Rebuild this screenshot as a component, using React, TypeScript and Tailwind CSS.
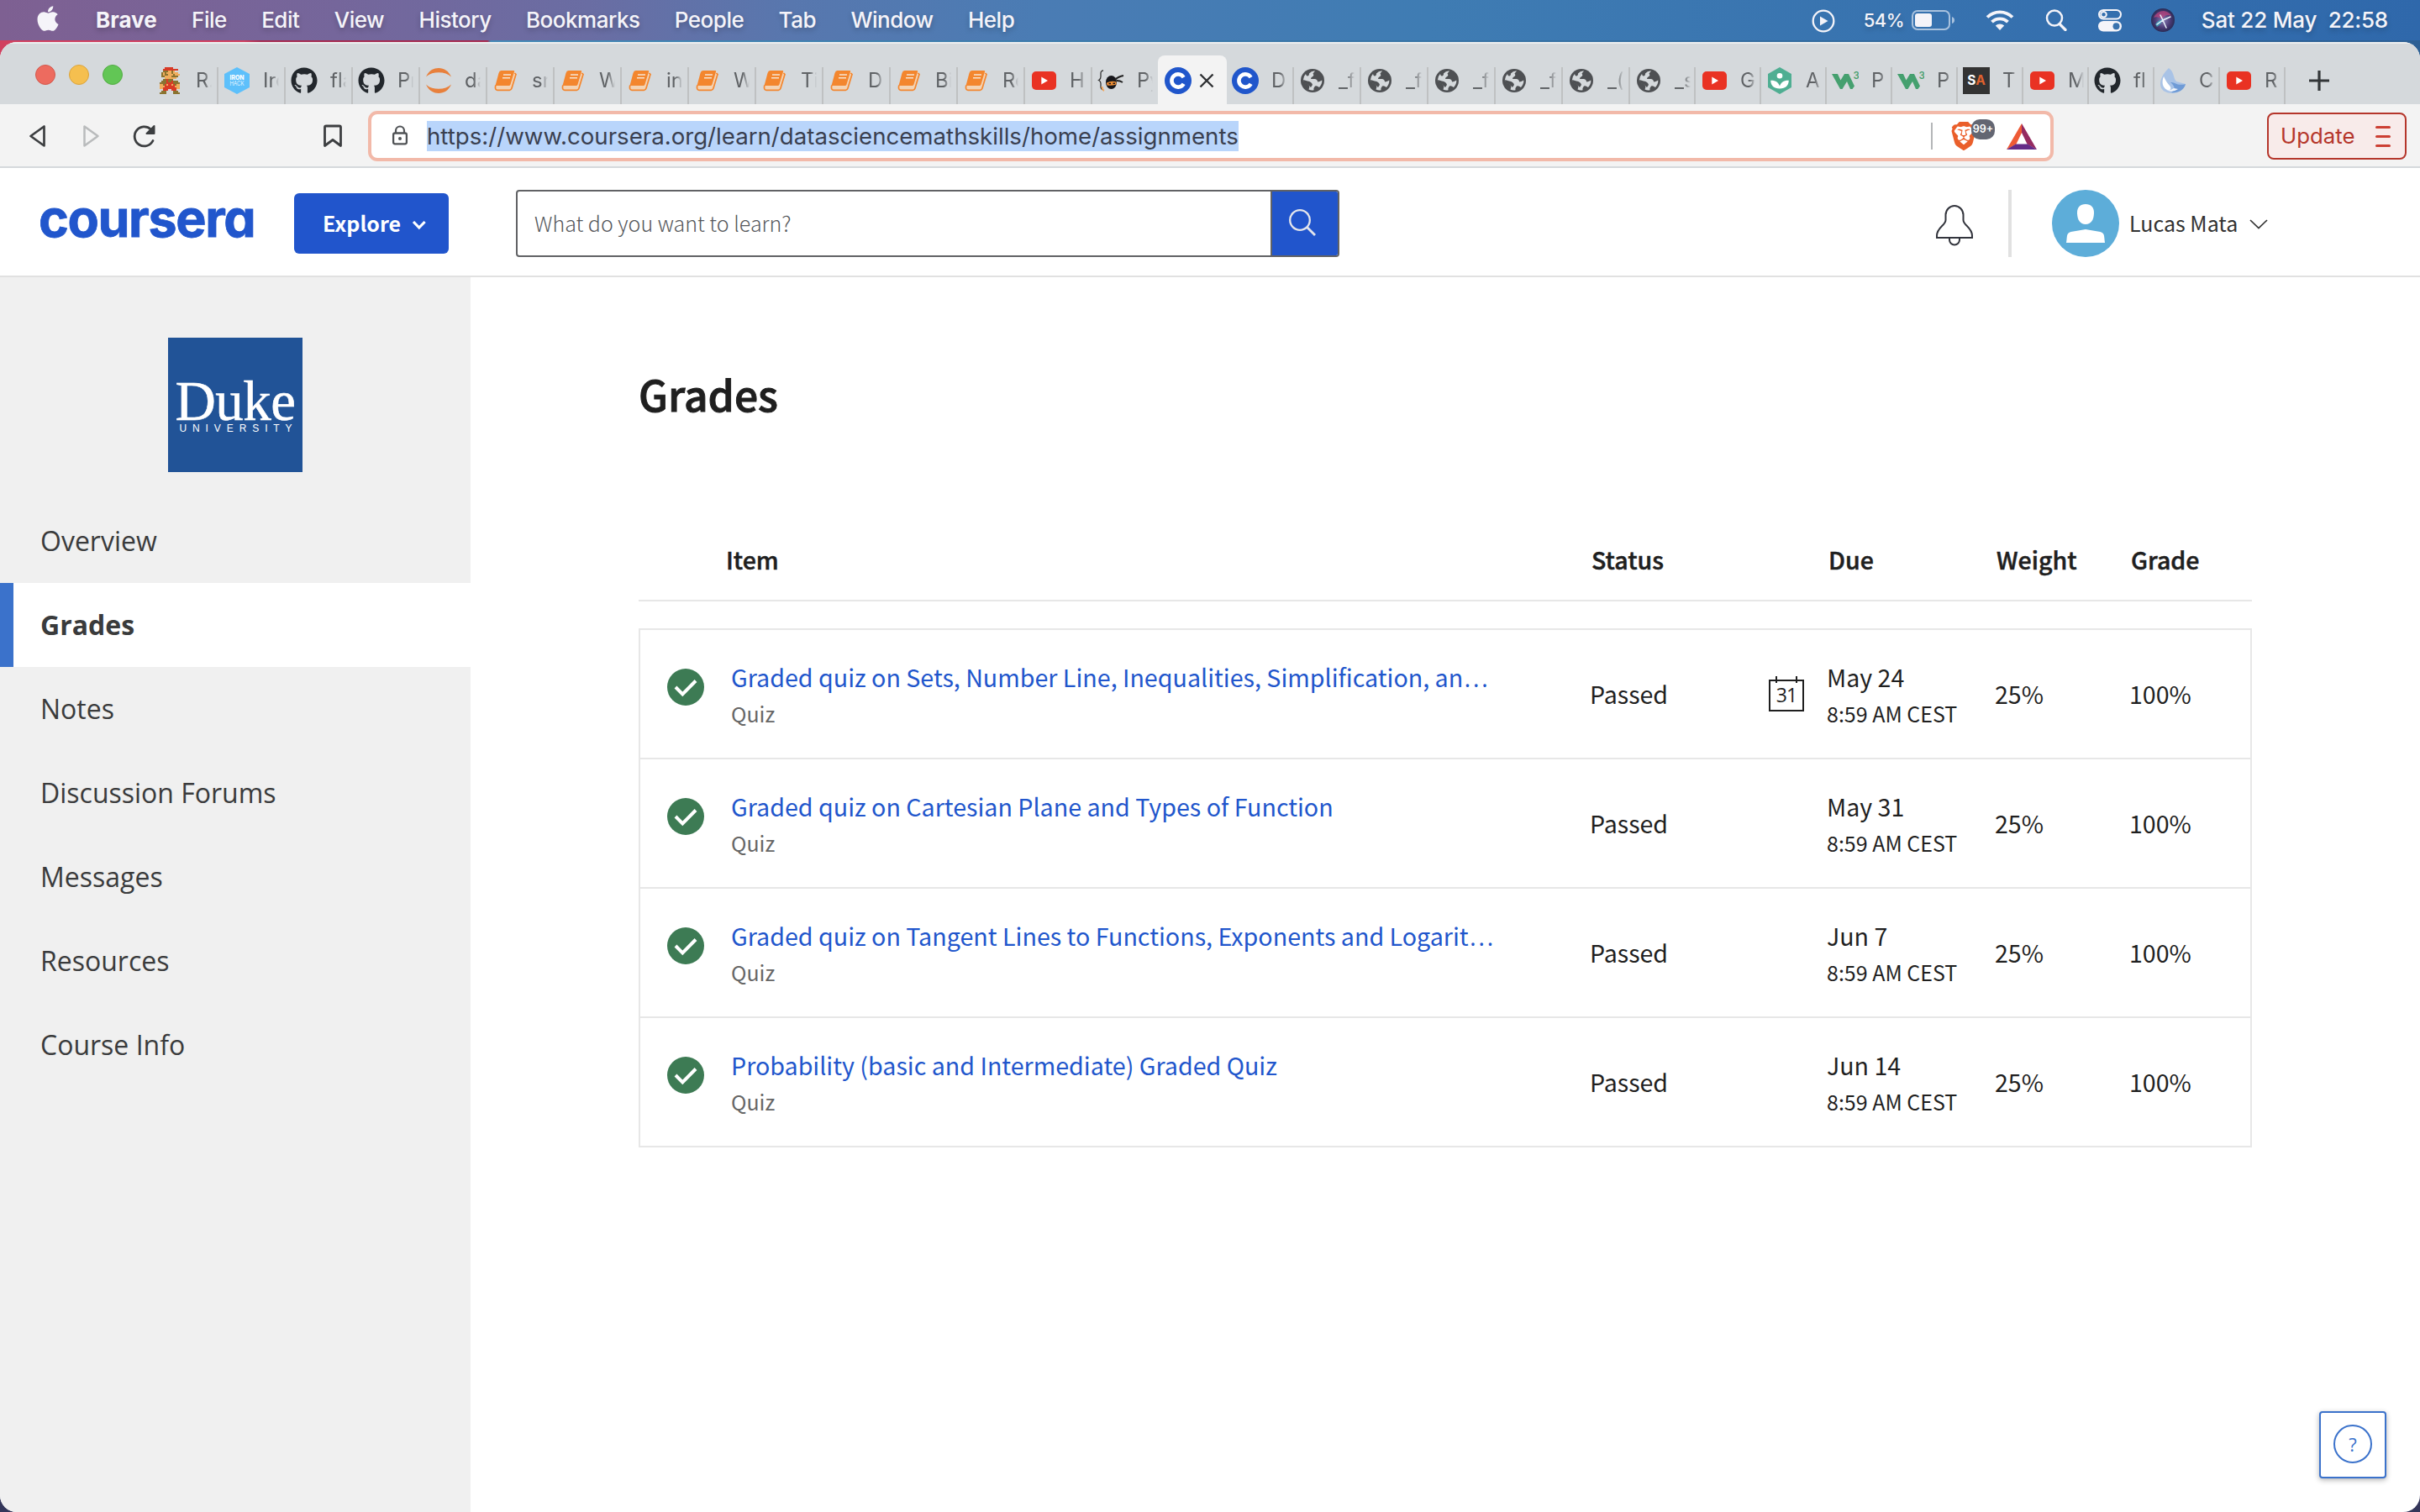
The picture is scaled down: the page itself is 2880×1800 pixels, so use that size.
import type { ReactNode } from 'react';
import { FaApple, FaGithub } from 'react-icons/fa';
import { SiBrave } from 'react-icons/si';

const MARIO = [
  '...RRRRR....',
  '..RRRRRRRRR.',
  '..BBBSSBS...',
  '.BSBSSSBSSS.',
  '.BSBBSSSBSSS',
  '.BBSSSSBBBB.',
  '...SSSSSSS..',
  '..BBRBBB....',
  '.BBBRBBRBBB.',
  'BBBBRRRRBBBB',
  'SSBRSRRSRBSS',
  'SSSRRRRRRSSS',
  'SSRRRRRRRRSS',
  '..RRR..RRR..',
  '.BBB....BBB.',
  'BBBB....BBBB',
];
const MARIO_COLORS: Record<string, string> = { R: '#d83a26', B: '#8a7330', S: '#f0ad5c' };

function MarioIcon() {
  return (
    <svg width="24" height="32" viewBox="0 0 12 16" shapeRendering="crispEdges">
      {MARIO.flatMap((row, y) =>
        row.split('').map((c, x) =>
          c === '.' ? null : <rect key={`${x}-${y}`} x={x} y={y} width="1" height="1" fill={MARIO_COLORS[c]} />,
        ),
      )}
    </svg>
  );
}

function IronhackIcon() {
  return (
    <svg width="32" height="32" viewBox="0 0 32 32">
      <path d="M16 0 31 8V24L16 32 1 24V8Z" fill="#5dc0fb" />
      <text x="16" y="15.4" fontSize="7.4" fontWeight="800" textAnchor="middle" fill="#fff" fontFamily="Inter, sans-serif" textLength="17" lengthAdjust="spacingAndGlyphs">IRON</text>
      <text x="16" y="22.4" fontSize="7.4" fontWeight="300" textAnchor="middle" fill="#fff" fontFamily="Inter, sans-serif" textLength="17" lengthAdjust="spacingAndGlyphs">HACK</text>
    </svg>
  );
}

function JupyterIcon() {
  return (
    <svg width="32" height="32" viewBox="0 0 32 32" fill="#e8803c">
      <path d="M1 11.5C4 4.5 9.5 1 16 1s12 3.500 15 10.500C27.500 8 22 6.200 16 6.200S4.500 8 1 11.500Z" />
      <path d="M1 20.500C4 27.500 9.500 31 16 31s12-3.500 15-10.500C27.500 24 22 25.800 16 25.800S4.500 24 1 20.500Z" />
    </svg>
  );
}

function BookIcon() {
  return (
    <svg width="28" height="26" viewBox="0 0 28 26">
      <path d="M8 1.500H24L26 5 20 24.500H3Q0 23 1.500 19Z" fill="#f3d3b4" />
      <path d="M8.500 1H23.500Q24.500 1 24 2.500L19.500 17.500Q19 19 17.500 19H1.500L5.500 4Q6.300 1 8.500 1Z" fill="#f3862e" />
      <path d="M11 6H20M10 9.800H19" stroke="#f8e3cf" strokeWidth="1.500" />
      <path d="M1.800 18.500Q0.500 24 4 24.300H18.500Q20.300 24.300 21 22L26 5.500 24.500 4" fill="none" stroke="#f3862e" strokeWidth="1.700" />
    </svg>
  );
}

function YoutubeIcon() {
  return (
    <svg width="29" height="22" viewBox="0 0 29 22">
      <rect width="29" height="22" rx="5" fill="#e93223" />
      <path d="M11.300 6.500 19 11 11.300 15.500Z" fill="#fff" />
    </svg>
  );
}

function NinjaIcon() {
  return (
    <svg width="32" height="26" viewBox="0 0 32 26">
      <path d="M7 1Q3.500 1 4 6T1.500 12.500Q4.500 14 4 18.500T7 24" fill="none" stroke="#333" strokeWidth="1.300" />
      <ellipse cx="16.500" cy="15" rx="6.500" ry="8" fill="#17171b" />
      <path d="M11 15.500Q17 12.500 22.500 14.500V17.500Q17 19.500 11.500 18.500Z" fill="#ef8f35" />
      <path d="M13.500 16.500h2.500M18.500 16.300h2.500" stroke="#17171b" strokeWidth="1.600" />
      <path d="M21 12Q25 8 31 7M23 13Q27 13 30 15" fill="none" stroke="#222" strokeWidth="2" />
      <path d="M5.500 20Q6 24 8 25" stroke="#f3a95f" strokeWidth="2" fill="none" />
    </svg>
  );
}

function CourseraIcon() {
  return (
    <svg width="32" height="32" viewBox="0 0 32 32">
      <circle cx="16" cy="16" r="16" fill="#2056cb" />
      <path d="M22.600 12.200A7.600 7.600 0 1 0 22.600 19.800" fill="none" stroke="#fff" strokeWidth="4.600" />
    </svg>
  );
}

function GlobeIcon() {
  return (
    <svg width="28" height="28" viewBox="0 0 28 28">
      <circle cx="14" cy="14" r="14" fill="#4e5053" />
      <path d="M17 2.500 14.500 5.500Q16.500 8 13.500 9.500 12 10 12 12H17Q20 12.500 20 15.500 22.500 15.500 25.300 13.500 25.600 18 22 22 19 19.500 17 20.500 15 22.500 15.500 25.300 12.500 26 9.500 24.500 11 22.500 10 20 9.500 18 6 17.500L2.800 13.500Q3 9 6 6 6.500 9 8.500 8.500 10.500 7.500 10 5.500 13 2 17 2.500Z" fill="#d5d9dc" />
      <path d="M3 13 8 14.500Q13 15 14 19L12 22 9 19 4 17Z" fill="#4e5053" />
    </svg>
  );
}

function CourseGreenIcon() {
  return (
    <svg width="28" height="32" viewBox="0 0 28 32">
      <path d="M14 0 28 8V24L14 32 0 24V8Z" fill="#4fae92" />
      <circle cx="14" cy="10.300" r="3.300" fill="#fff" />
      <path d="M14 25.500C7 25.500 3.500 22 3.200 15.800 9 15.500 12.500 18 14 22.500 15.500 18 19 15.500 24.800 15.800 24.500 22 21 25.500 14 25.500Z" fill="#fff" />
    </svg>
  );
}

function W3Icon() {
  return (
    <svg width="32" height="24" viewBox="0 0 32 24">
      <path d="M0 4H7L10.500 11.500 15 4H20L27 18.500 24.500 22H22L18 13 12.500 22H10Z" fill="#45a06f" />
      <text x="25.500" y="10" fontSize="11.500" fontWeight="600" fill="#45a06f" fontFamily="Inter, sans-serif">3</text>
    </svg>
  );
}

function SAIcon() {
  return (
    <div className="flex h-8 w-8 items-center justify-center bg-[#333333] font-['Inter',sans-serif] text-[15.500px] font-bold leading-none text-white">
      S<span className="text-[#e0622e]">A</span>
    </div>
  );
}

function AirIcon() {
  return (
    <svg width="30" height="32" viewBox="0 0 30 32">
      <path d="M10 1C3 8 0 14 0 20 0 27 6 31 14 31 22 31 28 27 30 20L19 17C15 13 17 6 10 1Z" fill="#a9c3e6" />
      <path d="M4 11C1.500 17 2 24 8 27 12 28.500 14 25 11 22 8 19 6 15 4 11Z" fill="#fff" />
      <path d="M12 18C18 17 19 23 30 20 28 28 20 31 13 30 19 27 17 22 12 18Z" fill="#6f9bd6" />
      <path d="M7 27Q14 31 21 26L16 25Q12 28 7 27Z" fill="#f2f6fb" />
    </svg>
  );
}

const GithubIcon = () => <FaGithub className="h-8 w-8 text-[#22272c]" />;

type TabSpec = { icon: ReactNode; label: string; narrow?: boolean };

const TABS_LEFT: TabSpec[] = [
  { icon: <MarioIcon />, label: 'R.' },
  { icon: <IronhackIcon />, label: 'Iro' },
  { icon: <GithubIcon />, label: 'fla' },
  { icon: <GithubIcon />, label: 'Pr' },
  { icon: <JupyterIcon />, label: 'da' },
  { icon: <BookIcon />, label: 'sm' },
  { icon: <BookIcon />, label: 'W' },
  { icon: <BookIcon />, label: 'int' },
  { icon: <BookIcon />, label: 'W' },
  { icon: <BookIcon />, label: 'Ti' },
  { icon: <BookIcon />, label: 'D' },
  { icon: <BookIcon />, label: 'Bi' },
  { icon: <BookIcon />, label: 'Re' },
  { icon: <YoutubeIcon />, label: 'H' },
  { icon: <NinjaIcon />, label: 'Py' },
];

const TABS_RIGHT: TabSpec[] = [
  { icon: <CourseraIcon />, label: 'D' },
  { icon: <GlobeIcon />, label: '_f' },
  { icon: <GlobeIcon />, label: '_f' },
  { icon: <GlobeIcon />, label: '_f' },
  { icon: <GlobeIcon />, label: '_f' },
  { icon: <GlobeIcon />, label: '_(' },
  { icon: <GlobeIcon />, label: '_s', narrow: true },
  { icon: <YoutubeIcon />, label: 'G', narrow: true },
  { icon: <CourseGreenIcon />, label: 'A', narrow: true },
  { icon: <W3Icon />, label: 'P', narrow: true },
  { icon: <W3Icon />, label: 'P', narrow: true },
  { icon: <SAIcon />, label: 'T', narrow: true },
  { icon: <YoutubeIcon />, label: 'M', narrow: true },
  { icon: <GithubIcon />, label: 'fl', narrow: true },
  { icon: <AirIcon />, label: 'C', narrow: true },
  { icon: <YoutubeIcon />, label: 'R', narrow: true },
];

function Tab({ tab, divider = true }: { tab: TabSpec; divider?: boolean }) {
  return (
    <div
      className={`flex h-11 shrink-0 pl-1.5 ${tab.narrow ? 'w-[78px]' : 'w-20'} ${divider ? 'border-r-2 border-[#bfc1c2]' : ''}`}
    >
      <div className="flex h-8 w-8 shrink-0 items-center justify-center">{tab.icon}</div>
      <div className="ml-[15px] h-8 w-[19px] overflow-hidden whitespace-nowrap text-[24px] leading-[31px] text-[#5f6265] [mask-image:linear-gradient(90deg,#000_55%,transparent)]">
        {tab.label}
      </div>
    </div>
  );
}

function MenuBar() {
  return (
    <div className="flex h-12 shrink-0 items-center bg-[linear-gradient(90deg,#7e6092_0px,#75669b_400px,#6a6da3_700px,#5877ae_940px,#4a7cb4_1240px,#3f7cb3_1700px,#3772af_2300px,#2f68ab_2880px)] text-[26px] font-medium tracking-[-0.5px] text-[#f5f4f9] [text-shadow:0_3px_6px_rgba(0,0,0,0.22)]">
      <FaApple className="-mt-1 ml-[43px] h-[34px] w-[28px]" />
      <div className="-mt-px ml-[43px] flex gap-[41.400px]">
        <span className="font-bold tracking-[0px]">Brave</span>
        <span>File</span>
        <span>Edit</span>
        <span>View</span>
        <span>History</span>
        <span>Bookmarks</span>
        <span>People</span>
        <span>Tab</span>
        <span>Window</span>
        <span>Help</span>
      </div>
      <div className="ml-auto flex items-center">
        <svg width="28" height="28" viewBox="0 0 28 28" className="mt-0.5">
          <circle cx="14" cy="14" r="12.300" fill="none" stroke="#f5f4f9" strokeWidth="2.300" />
          <path d="M10 8.500 19.500 14 10 19.500Z" fill="#f5f4f9" />
        </svg>
        <span className="ml-[34px] w-[50px] text-[22px] tracking-[-0.600px]">54%</span>
        <svg width="52" height="24" viewBox="0 0 52 24" className="ml-[7px]">
          <rect x="1" y="1" width="44" height="22" rx="6" fill="none" stroke="#a9c2de" strokeWidth="2" />
          <rect x="4" y="4" width="20" height="16" rx="3" fill="#f5f4f9" />
          <path d="M48 8Q51 9 51 12T48 16Z" fill="#a9c2de" />
        </svg>
        <svg width="34" height="26" viewBox="0 0 34 26" className="-mt-px ml-[36px]">
          <g fill="none" stroke="#f5f4f9" strokeWidth="3.800">
            <path d="M2 9.500A21.500 21.500 0 0 1 32 9.500" />
            <path d="M7.500 15.200A13.500 13.500 0 0 1 26.500 15.200" />
          </g>
          <path d="M17 25 11.800 19.500A7.500 7.500 0 0 1 22.200 19.500Z" fill="#f5f4f9" />
        </svg>
        <svg width="26" height="26" viewBox="0 0 26 26" className="-mt-px ml-[37px]">
          <circle cx="11" cy="10.500" r="9" fill="none" stroke="#f5f4f9" strokeWidth="2.500" />
          <path d="M17 17.500 24 24.500" stroke="#f5f4f9" strokeWidth="3.200" strokeLinecap="round" />
        </svg>
        <svg width="28" height="27" viewBox="0 0 28 27" className="mt-px ml-[37px]">
          <rect x="1" y="1" width="26" height="10.500" rx="5.200" fill="none" stroke="#f5f4f9" strokeWidth="2" />
          <circle cx="6.500" cy="6.200" r="3.300" fill="none" stroke="#f5f4f9" strokeWidth="2" />
          <rect y="14" width="28" height="12.500" rx="6.200" fill="#f5f4f9" />
          <circle cx="21.500" cy="20.200" r="4" fill="#3a72ad" />
        </svg>
        <svg width="28" height="28" viewBox="0 0 28 28" className="ml-[35px]">
          <defs>
            <radialGradient id="siri" cx="0.500" cy="0.500" r="0.550">
              <stop offset="0" stopColor="#8a7fb8" />
              <stop offset="0.600" stopColor="#4a3a74" />
              <stop offset="1" stopColor="#20264b" />
            </radialGradient>
          </defs>
          <circle cx="14" cy="14" r="14" fill="url(#siri)" />
          <path d="M3 11Q7 3 15 3 22 4 24 9 17 6 13 13 8 9 3 11Z" fill="#c2447f" opacity="0.700" />
          <path d="M5 19Q9 13 14 13.500 12 19 7 22Z" fill="#37b6c9" opacity="0.700" />
          <path d="M14 14 11 8M14 14 23 10M14 14 18 23M14 14 7 19" stroke="#e9f3fb" strokeWidth="1.500" strokeLinecap="round" />
        </svg>
        <span className="-mt-px mr-[38px] ml-[32px] whitespace-pre tracking-[-0.200px]">Sat 22 May  22:58</span>
      </div>
    </div>
  );
}

function TabStrip() {
  return (
    <div className="flex h-[74px] shrink-0 items-end border-t-2 border-[#eceeef] bg-[#d5d9dc]">
      <div className="flex h-full w-[180px] shrink-0 gap-4 pt-[25px] pl-[42px]">
        <div className="h-6 w-6 rounded-full border border-[#d3574b] bg-[#ed6b5f]" />
        <div className="h-6 w-6 rounded-full border border-[#dba43c] bg-[#f5bf4f]" />
        <div className="h-6 w-6 rounded-full border border-[#52ab43] bg-[#62c655]" />
      </div>
      {TABS_LEFT.map((tab, i) => (
        <Tab key={i} tab={tab} divider={i < TABS_LEFT.length - 1} />
      ))}
      <div className="-ml-[2px] flex h-[58px] w-[82px] shrink-0 rounded-t-lg bg-[#f3f3f3] pt-[14px] pl-2">
        <CourseraIcon />
        <svg width="18" height="18" viewBox="0 0 18 18" className="mt-[7px] ml-[9px]">
          <path d="M1.500 1.500 16.500 16.500M16.500 1.500 1.500 16.500" stroke="#2f3133" strokeWidth="2.400" />
        </svg>
      </div>
      {TABS_RIGHT.map((tab, i) => (
        <Tab key={i} tab={tab} />
      ))}
      <svg width="24" height="24" viewBox="0 0 24 24" className="mb-4 ml-[28px]">
        <path d="M12 0V24M0 12H24" stroke="#333638" strokeWidth="3.200" />
      </svg>
    </div>
  );
}

function Toolbar() {
  return (
    <div className="flex h-[76px] shrink-0 items-center border-b-2 border-[#d5d9dc] bg-[#f3f3f3]">
      <svg width="22" height="28" viewBox="0 0 22 28" className="mt-0.5 ml-[33px]">
        <path d="M19.500 2.500V25.500L3.500 14Z" fill="none" stroke="#3c3e40" strokeWidth="2.700" strokeLinejoin="round" />
      </svg>
      <svg width="22" height="28" viewBox="0 0 22 28" className="mt-0.5 ml-[42px]">
        <path d="M3.500 2.500V25.500L19.500 14Z" fill="none" stroke="#b9bbbc" strokeWidth="2.500" strokeLinejoin="round" />
      </svg>
      <svg width="30" height="30" viewBox="0 0 30 30" className="mt-px ml-[38px]">
        <path d="M25 20.500A11.500 11.500 0 1 1 22.500 7" fill="none" stroke="#3c3e40" strokeWidth="2.800" strokeLinecap="round" />
        <path d="M26.500 3V12H17.500Z" fill="#3c3e40" stroke="#3c3e40" strokeWidth="2" strokeLinejoin="round" />
      </svg>
      <svg width="24" height="28" viewBox="0 0 24 28" className="mt-0.5 ml-[197px]">
        <path d="M2.500 3.500Q2.500 2 4 2H20Q21.500 2 21.500 3.500V25.500L12 18.500 2.500 25.500Z" fill="none" stroke="#3c3e40" strokeWidth="2.800" strokeLinejoin="round" />
      </svg>
      <div className="mt-0.5 ml-[30px] flex h-[60px] w-[2006px] shrink-0 items-center rounded-[11px] border-4 border-[#f2b9a9] bg-white">
        <svg width="20" height="24" viewBox="0 0 20 24" className="-mt-0.5 ml-[24px]">
          <path d="M5 9V6.500A5 5 0 0 1 15 6.500V9" fill="none" stroke="#505356" strokeWidth="2.200" />
          <rect x="2.100" y="9.500" width="15.800" height="12.800" rx="2" fill="none" stroke="#505356" strokeWidth="2.300" />
          <circle cx="10" cy="16" r="2" fill="#505356" />
        </svg>
        <span className="ml-[22px] h-9 w-[966px] bg-[#b9d5fb] text-[27.650px] leading-9 whitespace-nowrap text-[#3a4050]">
          https://www.coursera.org/learn/datasciencemathskills/home/assignments
        </span>
        <div className="ml-[824px] h-8 w-[2px] bg-[#b4b6b8]" />
        <div className="relative ml-[20px]">
          <SiBrave className="h-9 w-[34px] text-[#ea5f2b]" />
          <div className="absolute -top-[2px] left-[26px] flex h-6 w-7 items-center justify-center rounded-[10px] bg-[#636672] text-[12.500px] font-semibold text-white">
            99+
          </div>
        </div>
        <svg width="36" height="31" viewBox="0 0 36 31" className="ml-[34px]">
          <path d="M18 0 0 31 11.500 24.500 18 11Z" fill="#ee5a35" />
          <path d="M18 0 36 31 24.500 24.500 18 11Z" fill="#952a60" />
          <path d="M0 31H36L25 24.500H11Z" fill="#642b87" />
        </svg>
      </div>
      <div className="mt-0.5 mr-4 ml-auto flex h-14 w-[166px] items-center justify-between rounded-lg border-2 border-[#b5362b] bg-[#f8ebea] pr-[17px] pl-[14px] text-[25.800px] text-[#b5362b]">
        <span className="mt-px">Update</span>
        <div className="flex flex-col gap-[8px]">
          <div className="h-[3px] w-[18px] rounded-full bg-[#cc3f33]" />
          <div className="h-[3px] w-[18px] rounded-full bg-[#cc3f33]" />
          <div className="h-[3px] w-[18px] rounded-full bg-[#cc3f33]" />
        </div>
      </div>
    </div>
  );
}

function SiteHeader() {
  return (
    <header className="flex h-[130px] shrink-0 items-center border-b-2 border-[#e1e1e1] bg-white font-['Noto_Sans_CJK_SC',sans-serif]">
      <div className="-mt-[8px] ml-[46px] w-[304px] font-['Inter',sans-serif] text-[61px] leading-[70px] font-bold tracking-[-1.400px] text-[#2156cc] [-webkit-text-stroke:0.8px_#2156cc] [font-feature-settings:'cv11']">
        coursera
      </div>
      <button className="mt-1 flex h-[72px] w-[184px] items-center rounded-md bg-[#2155cc] pl-[34px] text-[25px] font-bold text-white">
        Explore
        <svg width="18" height="14" viewBox="0 0 18 14" className="mt-1 ml-[13px]">
          <path d="M2 3 8.800 10 15.600 3" fill="none" stroke="#fff" strokeWidth="3.200" />
        </svg>
      </button>
      <div className="mt-1 ml-20 flex h-20 w-[980px] overflow-hidden rounded border-2 border-[#616265]">
        <div className="flex w-[898px] items-center border-r-2 border-[#616265] pl-5 text-[25px] font-light text-[#55575b]">
          What do you want to learn?
        </div>
        <div className="flex flex-1 items-center bg-[#2155cc] pl-[19px]">
          <svg width="34" height="34" viewBox="0 0 34 34" className="-mt-0.5">
            <circle cx="14" cy="14" r="11.800" fill="none" stroke="#e4e6ec" strokeWidth="2.300" />
            <path d="M22.500 22.500 32 32" stroke="#e4e6ec" strokeWidth="2.800" />
          </svg>
        </div>
      </div>
      <svg width="44" height="50" viewBox="0 0 44 50" className="mt-[9px] ml-[710px]">
        <path
          d="M11.500 12A10.500 11 0 0 1 32.500 12V18C32.500 24 43 27 43 36.500V39H1V36.500C1 27 11.500 24 11.500 18Z"
          fill="none"
          stroke="#33353d"
          strokeWidth="2"
        />
        <path d="M16 39V41.500A6 6 0 0 0 28 41.500V39" fill="none" stroke="#33353d" strokeWidth="2" />
      </svg>
      <div className="mt-1 ml-[42px] h-20 w-1 bg-[#e1e1e1]" />
      <svg width="80" height="80" viewBox="0 0 80 80" className="mt-1 ml-12">
        <circle cx="40" cy="40" r="40" fill="#5dadd9" />
        <path d="M40 17C46.500 17 50 21 50 27 50 35 47 41 40 41S30 35 30 27C30 21 33.500 17 40 17Z" fill="#fff" />
        <path d="M17 63 18 54.500Q18.500 51 22.500 50L40 47 57.500 50Q61.500 51 62 54.500L63 63Z" fill="#fff" />
      </svg>
      <span className="mt-1 ml-3 text-[25px] text-[#333]">Lucas Mata</span>
      <svg width="24" height="14" viewBox="0 0 24 14" className="mt-1.5 ml-[13px]">
        <path d="M2 2 12 11.500 22 2" fill="none" stroke="#333" strokeWidth="1.700" />
      </svg>
    </header>
  );
}

const NAV = ['Overview', 'Grades', 'Notes', 'Discussion Forums', 'Messages', 'Resources', 'Course Info'];

function Sidebar() {
  return (
    <aside className="w-[560px] shrink-0 bg-[#f0f0f0] pt-[72px] font-['Open_Sans',sans-serif] text-[32px] text-[#3a3b3c]">
      <div className="ml-[200px] flex h-40 w-40 flex-col items-center bg-[#215397] pt-[41px] text-white">
        <div className="font-['Liberation_Serif',serif] text-[67px] leading-[68px] tracking-[-0.500px] [-webkit-text-stroke:0.6px_#fff]">Duke</div>
        <div className="-mt-[7px] pl-[8px] font-['Liberation_Sans',sans-serif] text-[12px] leading-3 tracking-[6.900px]">UNIVERSITY</div>
      </div>
      <nav className="mt-8">
        {NAV.map((item) => (
          <div
            key={item}
            className={
              item === 'Grades'
                ? 'h-[100px] border-l-[16px] border-[#3b72cb] bg-white pl-8 leading-[100px] font-bold'
                : 'h-[100px] pl-12 leading-[100px]'
            }
          >
            {item}
          </div>
        ))}
      </nav>
    </aside>
  );
}

function PassedIcon() {
  return (
    <svg width="44" height="44" viewBox="0 0 44 44">
      <circle cx="22" cy="22" r="22" fill="#3d7b54" />
      <path d="M10 22 18.300 30.300 34 14.500" fill="none" stroke="#fff" strokeWidth="4" />
    </svg>
  );
}

function CalendarIcon() {
  return (
    <div className="relative h-[42px] w-[42px] pt-1">
      <div className="flex h-[38px] items-center justify-center border-2 border-[#1f1f1f] pb-0.5 font-['Open_Sans',sans-serif] text-[23px] leading-none tracking-[-1px]">31</div>
      <div className="absolute top-0 left-2 h-2 w-[2px] bg-[#1f1f1f]" />
      <div className="absolute top-0 right-2 h-2 w-[2px] bg-[#1f1f1f]" />
    </div>
  );
}

const QUIZZES = [
  { title: 'Graded quiz on Sets, Number Line, Inequalities, Simplification, an', cut: true, due: 'May 24', calendar: true },
  { title: 'Graded quiz on Cartesian Plane and Types of Function', due: 'May 31' },
  { title: 'Graded quiz on Tangent Lines to Functions, Exponents and Logarit', cut: true, due: 'Jun 7' },
  { title: 'Probability (basic and Intermediate) Graded Quiz', due: 'Jun 14' },
];

function GradesPage() {
  return (
    <main className="flex-1 pt-[98px] pl-[200px] font-['Noto_Sans_CJK_SC',sans-serif] text-[28.570px] text-[#1f1f1f]">
      <h1 className="h-20 text-[49.800px] leading-[80px] font-medium [-webkit-text-stroke:1px_#1f1f1f]">Grades</h1>
      <div className="mt-[118px] grid h-[90px] w-[1920px] grid-cols-[1030px_282px_200px_160px_1fr] border-b-2 border-[#e7e7e7] pl-[104px] leading-[79px] font-medium [-webkit-text-stroke:0.5px_#1f1f1f]">
        <span>Item</span>
        <span>Status</span>
        <span>Due</span>
        <span>Weight</span>
        <span>Grade</span>
      </div>
      <div className="mt-8 w-[1920px] border-2 border-b-0 border-[#e7e7e7]">
        {QUIZZES.map((quiz) => (
          <div
            key={quiz.due}
            className="grid h-[154px] grid-cols-[108px_1022px_213px_69px_200px_160px_144px] items-center border-b-2 border-[#e7e7e7]"
          >
            <div className="self-start pt-[46px] pl-8">
              <PassedIcon />
            </div>
            <div className="pt-0.5">
              <div className="h-[43px] leading-[44px] whitespace-nowrap text-[28.650px] text-[#2156cc]">
                {quiz.title}
                {quiz.cut && <span className="font-['Open_Sans',sans-serif] text-[43px] leading-[0] font-light">…</span>}
              </div>
              <div className="h-11 text-[24.900px] leading-[44px] text-[#666]">Quiz</div>
            </div>
            <span>Passed</span>
            <div>{quiz.calendar && <CalendarIcon />}</div>
            <div className="pt-0.5">
              <div className="h-[43px] leading-[44px]">{quiz.due}</div>
              <div className="h-11 text-[25px] leading-[44px]">8:59 AM CEST</div>
            </div>
            <span>25%</span>
            <span>100%</span>
          </div>
        ))}
      </div>
    </main>
  );
}

function HelpButton() {
  return (
    <button className="absolute right-10 bottom-10 flex h-20 w-20 items-center justify-center rounded border-2 border-[#3b72cb] bg-white shadow-[0_2px_6px_rgba(0,0,0,0.3)]">
      <span className="-mt-0.5 flex h-[46px] w-[46px] items-center justify-center rounded-full border-2 border-[#3b72cb] font-['Open_Sans',sans-serif] text-[22px] leading-none text-[#3b72cb]">
        ?
      </span>
    </button>
  );
}

export default function App() {
  return (
    <div className="flex h-[1800px] w-[2880px] flex-col overflow-hidden bg-[#34365a] bg-[linear-gradient(90deg,#d0405f_0px,#cf3d5e_290px,#a52a50_310px,#a52a50_580px,#4287b5_584px,#2c5f94_100%)] bg-[length:100%_120px] bg-no-repeat font-['Inter',sans-serif]">
      <MenuBar />
      <div className="relative mt-[2px] flex flex-1 flex-col overflow-hidden rounded-[20px] bg-white">
        <TabStrip />
        <Toolbar />
        <SiteHeader />
        <div className="flex flex-1">
          <Sidebar />
          <GradesPage />
        </div>
        <HelpButton />
      </div>
    </div>
  );
}
